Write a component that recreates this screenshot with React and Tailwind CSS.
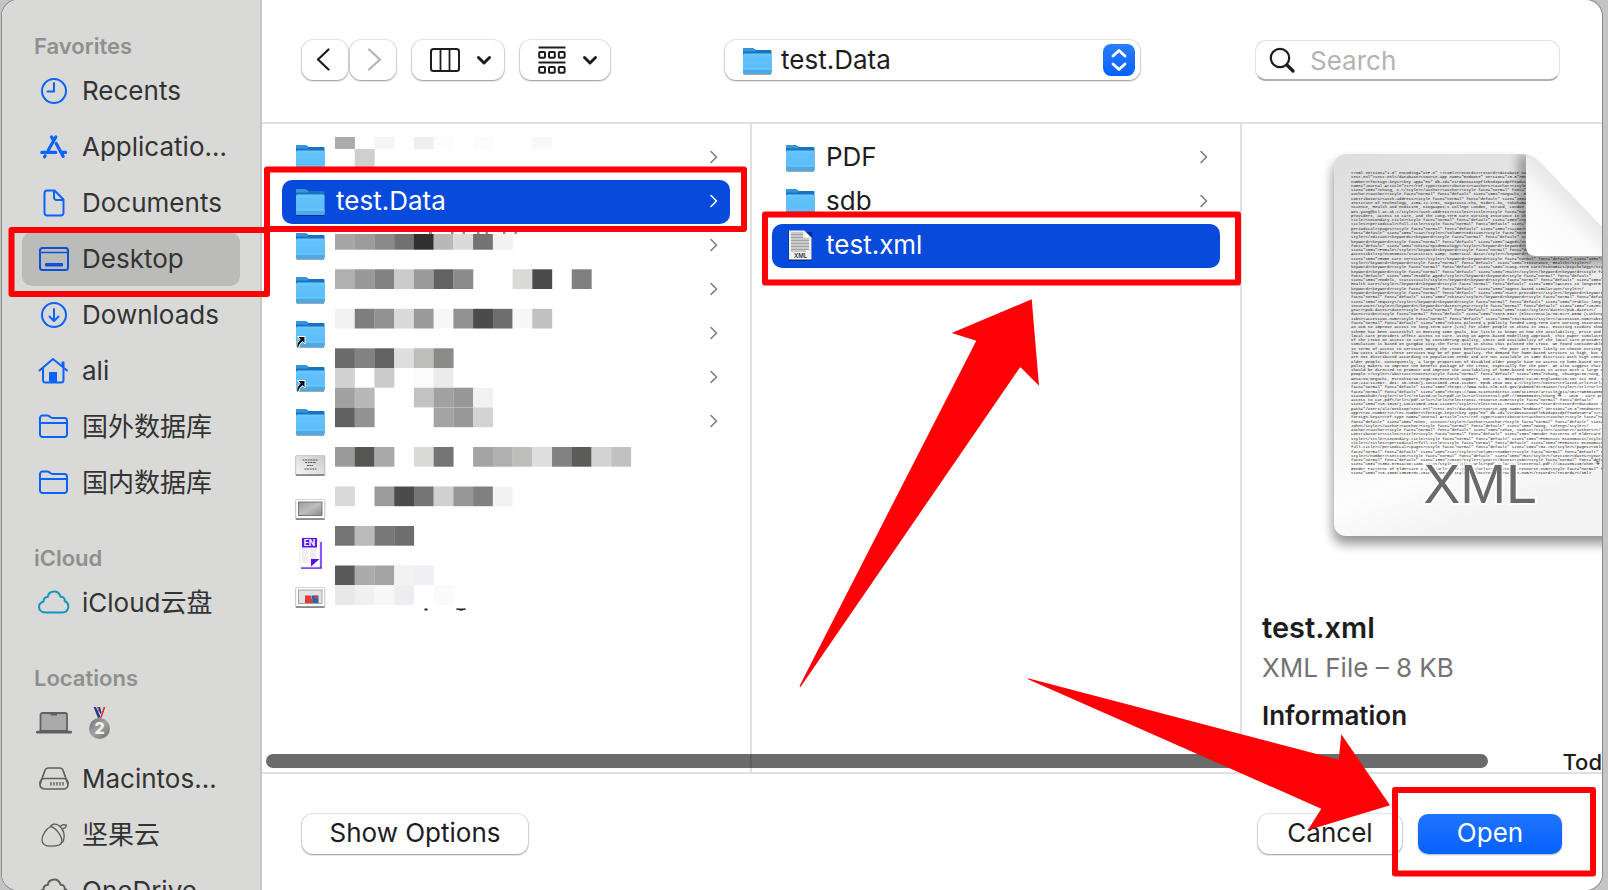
import React from "react";

const BLUE = "#0a63ff";
const GREY = "#5f5f5f";

/* ---------- sidebar icons, each on a 32 x 32 grid ---------- */

function Glyph({ color = BLUE, width = 2, children }) {
  return (
    <svg
      viewBox="0 0 32 32"
      className="h-8 w-8 shrink-0"
      fill="none"
      stroke={color}
      strokeWidth={width}
      strokeLinecap="round"
      strokeLinejoin="round"
      aria-hidden="true"
    >
      {children}
    </svg>
  );
}

const ClockGlyph = () => (
  <Glyph>
    <circle cx="16" cy="16" r="12" />
    <path d="M16 8v8.5H9.5" />
  </Glyph>
);

const AppsGlyph = () => (
  <Glyph width={3.2}>
    <path d="M17.8 6 10.4 19M13.6 6l1.6 2.8M3.8 21.4h14M6.6 25.8l.6-1M18.2 12.4l7 13M24 21.4h3.6" />
  </Glyph>
);

const DocumentGlyph = () => (
  <Glyph>
    <path d="M9 3.5h7.5l9 9V26a2.5 2.5 0 0 1-2.5 2.500H9A2.500 2.500 0 0 1 6.500 26V6A2.500 2.500 0 0 1 9 3.500Z" />
    <path d="M16 4v6.500a2.500 2.500 0 0 0 2.500 2.500H25" />
  </Glyph>
);

const DesktopGlyph = () => (
  <Glyph color="#0a50dc">
    <rect x="2" y="5" width="28" height="22" rx="2.500" />
    <path d="M2 9.500h28" strokeWidth="1.600" />
    <rect x="7" y="20" width="18" height="3.400" rx="0.800" fill="#0a50dc" stroke="none" />
  </Glyph>
);

const DownloadGlyph = () => (
  <Glyph>
    <circle cx="16" cy="16" r="12" />
    <path d="M16 10v11.500M11.500 17.500l4.500 4.500 4.500-4.500" />
  </Glyph>
);

const HomeGlyph = () => (
  <Glyph>
    <path d="M1.500 15.500 15 4l14 11.500" />
    <path d="M5 13.500V25a2.500 2.500 0 0 0 2.500 2.500h15.500a2.500 2.500 0 0 0 2.500-2.500V13.500" />
    <path d="M25 6.500v5.500" strokeWidth="3" strokeLinecap="butt" />
    <path d="M11 27.500V17h8v10.500Z" fill={BLUE} stroke="none" />
  </Glyph>
);

const FolderGlyph = () => (
  <Glyph>
    <path d="M2 7a2.500 2.500 0 0 1 2.500-2.500h4.500c1.500 0 2 .500 3 1.300s1.500 1.200 3 1.200H26.500A2.500 2.500 0 0 1 29 9.500V23.500A2.500 2.500 0 0 1 26.500 26h-22A2.500 2.500 0 0 1 2 23.500Z" />
    <path d="M2 12h27" strokeWidth="1.800" />
  </Glyph>
);

const CloudGlyph = ({ color = "#0b97bb" }) => (
  <Glyph color={color}>
    <path d="M8.500 25.500h16a6 6 0 0 0 2.200-11.500c.300-2.600-1.500-4.300-4-4.200C21.500 6.500 19 4.500 16.500 4.500c-3.800 0-6.300 2.500-6.800 5.500-2.800-.100-4.300 2-4.200 4.500C2.500 15.500 1 17.500 1 20c0 3 2.700 5.500 7.500 5.500Z" />
  </Glyph>
);

const LaptopGlyph = () => (
  <svg
    viewBox="0 0 36 32"
    className="-mx-[2px] h-8 w-9 shrink-0"
    fill="none"
    stroke={GREY}
    strokeLinecap="round"
    strokeLinejoin="round"
    aria-hidden="true"
  >
    <path d="M4.500 24V8a2 2 0 0 1 2-2h22.500a2 2 0 0 1 2 2v16Z" fill="#aaaaaa" strokeWidth="1.800" />
    <path d="M14.500 7h6.500" strokeWidth="3" strokeLinecap="butt" />
    <path d="M1.400 25.200h33.200" strokeWidth="2.800" />
  </svg>
);

const DriveGlyph = () => (
  <Glyph color={GREY} width={1.700}>
    <path d="M2.300 20.500 7 7.200C7.600 5.700 8.500 5 10 5h12c1.500 0 2.400.700 3 2.200L29.700 20.500" />
    <rect x="2" y="15.500" width="28" height="10.500" rx="4.500" />
    <path d="M13 19v3.500M16 19v3.500M19 19v3.500M22 19v3.500M25 19v3.500" strokeWidth="1.400" strokeLinecap="butt" />
  </Glyph>
);

const NutGlyph = () => (
  <Glyph color={GREY} width={1.300}>
    <path d="M12.500 7.500C8 10 4 16 4 21c0 4.500 3.500 6.200 9 6.200 6.500 0 11-.700 11-4.700 0-5-5.500-13.500-11.500-15Z" />
    <path d="M12.500 7.500C13.500 5 17 4.500 20 6c5.500 3 7.500 10.500 5.500 15.500-.500 1.500-1.500 2.300-2.500 2" />
    <path d="M22.500 8c.500-2 2.500-2.800 6-1.800-.200 2.500-2.500 3.500-4.500 3.300" />
  </Glyph>
);

function Medal() {
  return (
    <svg viewBox="0 0 24 34" className="ml-[6px] h-[34px] w-6" role="img" aria-label="2nd place medal">
      <defs>
        <linearGradient id="medal" x1="0" y1="0" x2="1" y2="1">
          <stop offset="0" stopColor="#6f6f6f" />
          <stop offset="0.500" stopColor="#a3a3a3" />
          <stop offset="1" stopColor="#6a6a6a" />
        </linearGradient>
      </defs>
      <path d="M5.500 1H9l3 7 3-7h3l-4.500 11h-2.500Z" fill="#f4f4f4" />
      <path d="M5.500 1H8l4.500 9.500-1.500 1.500h-1Z" fill="#1d3f8f" />
      <path d="M10 1h2l1.500 5-1 2.500Z" fill="#1d3f8f" />
      <path d="M15.500 1h2L13.500 12h-1.500ZM9 1h1l1.500 5-.5 1Z" fill="#e1262d" />
      <circle cx="11.500" cy="22.500" r="10.500" fill="url(#medal)" />
      <text x="11.500" y="28" textAnchor="middle" fontSize="16" fontWeight="800" fill="#f0f0f0" fontFamily="Inter, sans-serif">
        2
      </text>
    </svg>
  );
}

/* ---------- file icons ---------- */

function Folder({ alias = false }) {
  return (
    <svg viewBox="0 -1 32 32" className="h-8 w-8 shrink-0" aria-hidden="true">
      <defs>
        <linearGradient id="folder-front" x1="0" y1="0" x2="0" y2="1">
          <stop offset="0" stopColor="#6fc8fb" />
          <stop offset="0.200" stopColor="#60c1fa" />
          <stop offset="1" stopColor="#5cbdf7" />
        </linearGradient>
      </defs>
      <path d="M2.500 28.500h27.500v1.500H2.500Z" fill="#000" opacity="0.350" />
      <path d="M2 3h9.500l3.500 2h14.500q1 0 1 1v21H2Z" fill="#1873c2" />
      <path d="M2 3h9l3.500 2v1.500H2Z" fill="#3595d8" />
      <path d="M2 10q0-1.500 1.500-1.500h25.500q1.500 0 1.500 1.500v17.500q0 1.500-1.500 1.500H3.500Q2 29 2 27.500Z" fill="url(#folder-front)" />
      <path d="M2 24.500h28.500v3q0 1.500-1.500 1.500H3.500Q2 29 2 27.500Z" fill="#4aa9e6" />
      <path d="M2 24h28.500" stroke="#7fd0fb" strokeWidth="0.800" />
      {alias && (
        <path
          d="M3.500 18.500H11v7.500l-2.500-2.300Q5 26 4.500 30H2.500Q2 25 6 21.300Z"
          fill="#111"
          stroke="#fff"
          strokeWidth="1"
        />
      )}
    </svg>
  );
}

function Thumb({ kind }) {
  return (
    <svg viewBox="0 1 32 32" className="h-8 w-8 shrink-0" aria-hidden="true">
      <defs>
        <linearGradient id="slide" x1="0" y1="1" x2="1" y2="0">
          <stop offset="0" stopColor="#f6f6f6" />
          <stop offset="1" stopColor="#c9c9c9" />
        </linearGradient>
        <linearGradient id="photo" x1="0" y1="0" x2="1" y2="1">
          <stop offset="0" stopColor="#9a9a9a" />
          <stop offset="0.500" stopColor="#bdbdbd" />
          <stop offset="1" stopColor="#8a8a8a" />
        </linearGradient>
      </defs>
      <rect x="1.200" y="8" width="30" height="19.800" rx="1" fill="#000" opacity="0.200" />
      <rect x="1.700" y="7.500" width="29" height="19.500" rx="0.800" fill={kind === "text" ? "url(#slide)" : "#fff"} stroke="#b5b5b5" strokeWidth="0.600" />
      <path d="M2 27h28.500" stroke="#5f5f5f" strokeWidth="1.200" />
      {kind === "text" && (
        <path d="M8.500 12h15M11 14.500h11M13 17.500h6M10.500 21h12" stroke="#555" strokeWidth="1" strokeDasharray="2 0.600" />
      )}
      {kind === "grey" && (
        <rect x="4.500" y="10" width="23.500" height="13.500" fill="url(#photo)" stroke="#6f6f6f" strokeWidth="0.900" />
      )}
      {kind === "chart" && (
        <g>
          <rect x="4.500" y="10" width="23.500" height="13.500" fill="#e3e3e3" stroke="#999" strokeWidth="0.900" />
          <path d="M11 15.500h6v7.500h-6Z" fill="#e43a3a" />
          <path d="M17.500 15.500h7v7.500h-7Z" fill="#1f66b5" />
          <path d="M20.500 15.500h3.500v3h-3.500ZM17 19h2v4h-2Z" fill="#e43a3a" />
        </g>
      )}
    </svg>
  );
}

function EndNoteFile() {
  return (
    <svg viewBox="0 0 32 32" className="h-8 w-8 shrink-0" aria-hidden="true">
      <path d="M7 31h20V5" fill="none" stroke="#5a0fee" strokeWidth="1.400" />
      <path d="M6 3.500H25.500V30H6Z" fill="#fff" stroke="#ddd" strokeWidth="0.600" />
      <path d="M8 11h6v15H8ZM16 11h6v11h-6Z" fill="#eceef2" />
      <path d="M8 1h15v9.500H8Z" fill="#5a0fee" />
      <path d="M17 22h8.500L17 29.500Z" fill="#5a0fee" />
      <text x="15.500" y="8.800" textAnchor="middle" fontSize="8.500" fontWeight="700" fill="#fff" fontFamily="Inter, sans-serif">
        EN
      </text>
    </svg>
  );
}

function XmlFile() {
  return (
    <svg viewBox="0 0 32 32" className="h-8 w-8 shrink-0" aria-hidden="true">
      <path d="M4.500 3h23.500v29H4.500Z" fill="#000" opacity="0.350" />
      <path d="M5 1.500h15L27.500 9v21.500H5Z" fill="#f1f1f1" />
      <path d="M7 4h12M7 5.500h12M7 7h12M7 8.500h12M7 10h18M7 11.500h18M7 13h18M7 14.500h18M7 16h18M7 17.500h18M7 19h18M7 20.500h18M7 22h15" stroke="#9a9a9a" strokeWidth="0.900" />
      <path d="M20 1.500 27.500 9H20Z" fill="#fff" stroke="#c9c9c9" strokeWidth="0.500" />
      <text x="16.500" y="28.500" textAnchor="middle" fontSize="6" fontWeight="600" fill="#333" fontFamily="Inter, sans-serif">
        XML
      </text>
    </svg>
  );
}

/* ---------- sidebar ---------- */

const sections = [
  {
    title: "Favorites",
    items: [
      { label: "Recents", icon: <ClockGlyph /> },
      { label: "Applicatio…", icon: <AppsGlyph /> },
      { label: "Documents", icon: <DocumentGlyph /> },
      { label: "Desktop", icon: <DesktopGlyph />, active: true },
      { label: "Downloads", icon: <DownloadGlyph /> },
      { label: "ali", icon: <HomeGlyph /> },
      { label: "国外数据库", icon: <FolderGlyph /> },
      { label: "国内数据库", icon: <FolderGlyph /> },
    ],
  },
  { title: "iCloud", items: [{ label: "iCloud云盘", icon: <CloudGlyph /> }] },
  {
    title: "Locations",
    items: [
      { label: <Medal />, icon: <LaptopGlyph /> },
      { label: "Macintos…", icon: <DriveGlyph /> },
      { label: "坚果云", icon: <NutGlyph /> },
      { label: "OneDrive", icon: <CloudGlyph color={GREY} /> },
    ],
  },
];

function Sidebar() {
  return (
    <nav className="flex w-[260px] shrink-0 flex-col gap-[30px] overflow-hidden border-r-2 border-[#c6c6c5] bg-[#d9d9d8] pt-7">
      {sections.map((section) => (
        <section key={section.title} className="shrink-0 pr-5 pl-5">
          <h2 className="h-9 pl-3 text-[22px] leading-9 font-semibold text-[#8f8f8d]">{section.title}</h2>
          <ul className="flex flex-col gap-[2px]">
            {section.items.map((item, i) => (
              <li key={i}>
                <button
                  type="button"
                  className={
                    item.active
                      ? "flex h-[54px] w-full items-center gap-3 rounded-[10px] bg-[#bbbbba] pl-4 text-left whitespace-nowrap"
                      : "flex h-[54px] w-full items-center gap-3 pl-4 text-left whitespace-nowrap"
                  }
                >
                  {item.icon}
                  <span className="leading-8 text-[#333333]">{item.label}</span>
                </button>
              </li>
            ))}
          </ul>
        </section>
      ))}
    </nav>
  );
}

/* ---------- toolbar ---------- */

const control =
  "flex h-10 items-center justify-center rounded-[11px] bg-white shadow-[0_0_1px_1px_rgba(0,0,0,0.1),0_1px_2px_rgba(0,0,0,0.35)]";

function SmallChevron() {
  return (
    <svg viewBox="0 0 16 12" className="h-3 w-4" fill="none" stroke="#1d1d1d" strokeWidth="3" strokeLinecap="round" strokeLinejoin="round" aria-hidden="true">
      <path d="M2.500 3.500 8 9l5.500-5.500" />
    </svg>
  );
}

function Toolbar() {
  return (
    <header className="flex h-[124px] shrink-0 items-start justify-between border-b-2 border-[#e0e0e0] pt-10 pr-[42px] pl-10">
      <div className="flex gap-4">
        <div className="flex gap-[2px]">
          <button type="button" aria-label="Back" className={`${control} w-[46px]`}>
            <svg viewBox="0 0 24 24" className="h-6 w-6" fill="none" stroke="#1d1d1d" strokeWidth="2.200" strokeLinecap="round" strokeLinejoin="round">
              <path d="M15.500 1.500 5 11.500l10.500 10" />
            </svg>
          </button>
          <button type="button" aria-label="Forward" className={`${control} w-[46px]`}>
            <svg viewBox="0 0 24 24" className="h-6 w-6" fill="none" stroke="#b4b4b4" strokeWidth="2.200" strokeLinecap="round" strokeLinejoin="round">
              <path d="M8 1.500 19 11.500 8 21.500" />
            </svg>
          </button>
        </div>
        <button type="button" aria-label="View as columns" className={`${control} w-[92px] gap-4 pl-[6px]`}>
          <svg viewBox="0 0 30 24" className="h-6 w-[30px]" fill="none" stroke="#1d1d1d" aria-hidden="true">
            <rect x="1" y="1" width="28" height="22" rx="2.500" strokeWidth="2" />
            <path d="M10.500 1v22M19.500 1v22" strokeWidth="1.800" />
          </svg>
          <SmallChevron />
        </button>
        <button type="button" aria-label="Group items" className={`${control} w-[90px] gap-4 pl-[6px]`}>
          <svg viewBox="0 0 28 28" className="h-7 w-7" fill="none" stroke="#1d1d1d" strokeWidth="2" aria-hidden="true">
            <path d="M0.500 1.500h27M0.500 16.500h27" />
            <rect x="1.200" y="6" width="5.800" height="5.800" rx="1" />
            <rect x="11" y="6" width="5.800" height="5.800" rx="1" />
            <rect x="20.800" y="6" width="5.800" height="5.800" rx="1" />
            <rect x="1.200" y="21" width="5.800" height="5.800" rx="1" />
            <rect x="11" y="21" width="5.800" height="5.800" rx="1" />
            <rect x="20.800" y="21" width="5.800" height="5.800" rx="1" />
          </svg>
          <SmallChevron />
        </button>
      </div>

      <div className={`${control} relative w-[415px]`}>
        <span className="pointer-events-none absolute left-4">
          <Folder />
        </span>
        <select aria-label="Current folder" className="h-full w-full appearance-none rounded-[11px] bg-transparent pb-[2px] pl-14 text-[#1d1d1d]">
          <option>test.Data</option>
        </select>
        <span className="pointer-events-none absolute right-[5px] flex h-8 w-8 items-center justify-center rounded-lg bg-linear-to-b from-[#2a7dff] to-[#0560fd]">
          <svg viewBox="0 0 20 24" className="h-6 w-5" fill="none" stroke="#fff" strokeWidth="2.800" strokeLinecap="round" strokeLinejoin="round" aria-hidden="true">
            <path d="M4 8l6-5.500L16 8M4 16l6 5.500 6-5.500" />
          </svg>
        </span>
      </div>

      <label className="flex h-[41px] w-[305px] items-center gap-[15px] rounded-[11px] border border-b-2 border-[#e2e2e2] border-b-[#b0b0b0] bg-white pl-[13px]">
        <svg viewBox="0 0 26 26" className="h-[26px] w-[26px] shrink-0" fill="none" stroke="#1d1d1d" strokeLinecap="round" aria-label="Search">
          <circle cx="11" cy="11" r="9.200" strokeWidth="2.200" />
          <path d="m18 18 6 6" strokeWidth="3.200" />
        </svg>
        <input type="search" placeholder="Search" className="w-full min-w-0 bg-transparent outline-none placeholder:text-[#b3b3b3]" />
      </label>
    </header>
  );
}

/* ---------- browser columns ---------- */

function Row({ icon, name, chevron, active, label }) {
  return (
    <li>
      <button
        type="button"
        aria-label={label}
        className={
          active
            ? "flex h-11 w-full items-center rounded-[10px] bg-[#084bdc] px-3 pb-[2px] text-left text-white"
            : "flex h-11 w-full items-center px-3 pb-[2px] text-left text-[#1d1d1d]"
        }
      >
        {icon}
        <span className="ml-[10px] flex-1 leading-8">{name}</span>
        {chevron && (
          <svg viewBox="0 0 10 14" className="h-[14px] w-[10px]" fill="none" stroke={active ? "#fff" : "#7c7c7c"} strokeWidth="1.600" strokeLinecap="round" strokeLinejoin="round" aria-hidden="true">
            <path d="M3 1.500 8.500 7 3 12.500" />
          </svg>
        )}
      </button>
    </li>
  );
}

/* Pixelated names: [top, height, [cell colours, "" for an empty cell]] */
const mosaic = [
  [0, 12, ["#ababab", "", "#f5f5f5", "", "#eeeff1", "#fdfdfd", "", "#fcfcfc", "", "", "#f8f8f8"]],
  [12, 19.7, ["", "#cfcfcf"]],
  [97, 15.7, ["#a6a6a6", "#9b9b9b", "#8a8a88", "#727272", "#30302f", "#b8b8b8", "#dadad8", "#737373", "#f2f0f1"]],
  [132.3, 19.7, ["#b0b0b0", "#999", "#828282", "#cbcbcb", "#9a9a9a", "#626262", "#8b8b89", "", "", "#d9d9d8", "#4a4a4a", "", "#808080"]],
  [171.800, 19.7, ["#f0f1f3", "#7f7f7f", "#929292", "#dadad9", "#9a9a9a", "#f7f7f7", "#929292", "#4b4b4b", "#6e6e6e", "#f7f7f7", "#c1c1bf"]],
  [211.300, 19.7, ["#6b6b6b", "#828282", "#626262", "#dedede", "#bdbdbb", "#8b8b88"]],
  [231, 19.7, ["#d2d2d2", "", "#cbcbcb", "", "#fbfbfb", "#ebebeb"]],
  [250.700, 19.7, ["#a1a1a1", "#b8b8b8", "", "", "#c2c2c2", "#a1a1a1", "#979797", "#f2f0f1"]],
  [270.500, 19.7, ["#616161", "#929292", "", "", "", "#a4a4a4", "#999", "#d3d3d3"]],
  [310, 19.7, ["#9a9a9a", "#555553", "#a9a9a9", "", "#dadad8", "#747474", "", "#a4a4a4", "#b0b0b0", "#bebebc", "#dedede", "#828282", "#5b5b5a", "#d3d3d3", "#c1c1c1"]],
  [349.500, 19.7, ["#d9d9d7", "", "#9b9b9b", "#4b4b4b", "#747474", "#d0d0d0", "#979797", "#808080", "#f3f1f2"]],
  [389, 19.7, ["#747474", "#bababa", "#787878", "#6e6e6e"]],
  [428.500, 19.7, ["#595957", "#ababab", "#a3a3a3", "#f3f1f2", "#eff0f3"]],
  [448.200, 19.7, ["#e8e8e8", "#eff0f2", "#f7f7f7", "#ebedf0", "", "#fafafa"]],
];

function Mosaic() {
  return (
    <svg viewBox="0 0 300 480" className="pointer-events-none absolute top-[13px] left-[73px] h-[480px] w-[300px]" aria-hidden="true">
      {mosaic.map(([top, height, cells], r) =>
        cells.map((fill, c) =>
          fill ? <rect key={`${r}-${c}`} x={c * 19.73} y={top} width="19.900" height={height} fill={fill} /> : null
        )
      )}
      <path d="M94 96h3M116 96h2.500M127.500 96h2.500M142 96h2.500M150.500 96h2.500M168 96h2.500M179.500 96h2.500" stroke="#222" strokeWidth="1.200" />
      <path d="M89.500 472.500h3" stroke="#222" strokeWidth="2" />
      <path d="M121.500 472q5 2.500 9 0Z" stroke="#222" strokeWidth="1" fill="#222" />
    </svg>
  );
}

const codeLines = [
  '<?xml version="1.0" encoding="UTF-8" ?><xml><records><record><database name="test.enl" path="/Users/ali/',
  'test.enl">test.enl</database><source-app name="EndNote" version="20.0">EndNote</source-app><rec-number>1',
  'number><foreign-keys><key app="EN" db-id="v1rd9seaasxpflebxd4pz1dpffewd4twerw">1</key></foreign-keys>',
  'name="Journal Article">17</ref-type><contributors><authors><author><style face="normal" font="default"',
  'size="100%">Chang, S.</style></author><author><style face="normal" font="default" size="100%">Yang, W.',
  'author><author><style face="normal" font="default" size="100%">Deguchi, H.</style></author></authors>',
  'contributors><auth-address><style face="normal" font="default" size="100%">Department of Computer Sci',
  'Institute of Technology, 4259-J2-1701, Nagatsuta-cho, Midori-ku, Yokohama 226-8502, Japan. Electronic',
  'Science, Health and Medicine, King&apos;s College London, Strand, London WC2R 2LS, UK. Electronic add',
  'wei.yang@kcl.ac.uk.</style></auth-address><titles><title><style face="normal" font="default" size="10',
  'providers, access to care, and the Long-Term Care Nursing Insurance in China: An agent-based simulat',
  'title><secondary-title><style face="normal" font="default" size="100%">Soc Sci Med</style></secondary',
  'titles><periodical><full-title><style face="normal" font="default" size="100%">Soc Sci Med</style></f',
  'periodical><pages><style face="normal" font="default" size="100%">112667</style></pages><volume><styl',
  'font="default" size="100%">244</style></volume><edition><style face="normal" font="default" size="100',
  'style></edition><keywords><keyword><style face="normal" font="default" size="100%">Adult</style></key',
  'keyword><keyword><style face="normal" font="default" size="100%">Aged</style></keyword><keyword><styl',
  'font="default" size="100%">China/epidemiology</style></keyword><keyword><style face="normal" font="de',
  'size="100%">Female</style></keyword><keyword><style face="normal" font="default" size="100%">Health S',
  'Accessibility/economics/statistics &amp; numerical data</style></keyword><keyword><style face="normal',
  'size="100%">Home Care Services</style></keyword><keyword><style face="normal" font="default" size="100%">Humans/',
  'style></keyword><keyword><style face="normal" font="default" size="100%">Insurance, Health</style></',
  'keyword><keyword><style face="normal" font="default" size="100%">Long-Term Care/economics/psychology</style></',
  'keyword><keyword><style face="normal" font="default" size="100%">Male</style></keyword><keyword><style face="normal"',
  'font="default" size="100%">Middle Aged</style></keyword><keyword><style face="normal" font="default"',
  'size="100%">Models, Statistical</style></keyword><keyword><style face="normal" font="default" size="100%">Quality of',
  'Health Care</style></keyword><keyword><style face="normal" font="default" size="100%">Access to longterm care</style></',
  'keyword><keyword><style face="normal" font="default" size="100%">Agent-based simulation</style></',
  'keyword><keyword><style face="normal" font="default" size="100%">Care providers</style></keyword><keyword><style',
  'face="normal" font="default" size="100%">China</style></keyword><keyword><style face="normal" font="default"',
  'size="100%">Equity</style></keyword><keyword><style face="normal" font="default" size="100%">Public long-term care',
  'insurance</style></keyword></keywords><dates><year><style face="normal" font="default" size="100%">2020</style></',
  'year><pub-dates><date><style face="normal" font="default" size="100%">Jan</style></date></pub-dates></',
  'dates><isbn><style face="normal" font="default" size="100%">1873-5347 (Electronic)&#xD;0277-9536 (Linking)</style></',
  'isbn><accession-num><style face="normal" font="default" size="100%">31734481</style></accession-num><abstract><style',
  'face="normal" font="default" size="100%">China piloted a publicly funded Long-Term Care Nursing Insurance (LTCNI) with',
  'an aim to improve access to long-term care (LTC) for older people in China in 2012. Existing studies showed that the',
  'scheme has been successful in meeting some goals, but little is known on how the availability, price and quality of',
  'local care providers affect access to care. Using an Agent-based Modelling approach, this paper simulates the effect',
  'of the LTCNI on access to care by considering quality, costs and availability of the local care providers. Our',
  'simulation is based on Qingdao city-the first city in China that piloted the LTCNI. We found considerable discrepancies',
  'in terms of access to services among the LTCNI beneficiaries. The poor are more likely to choose nursing home care with',
  'low costs albeit these services may be of poor quality. The demand for home-based services is high, but those services',
  'are not distributed according to population needs and are not available in some districts with high concentration of',
  'older people. Consequently, a large proportion of disabled older people have no access to home-based services. We urge',
  'policy makers to improve the benefit package of the LTCNI, especially for the poor. We also suggest that more resources',
  'should be directed to promote and improve the availability of home-based services in areas with a large number of older',
  'people.</style></abstract><notes><style face="normal" font="default" size="100%">Chang, Shuang&#xD;Yang,',
  'Wei&#xD;Deguchi, Hiroshi&#xD;eng&#xD;Research Support, Non-U.S. Gov&apos;t&#xD;England&#xD;Soc Sci Med. 2020',
  'Jan;244:112667. doi: 10.1016/j.socscimed.2019.112667. Epub 2019 Nov 9.</style></notes><related-urls><url><style',
  'face="normal" font="default" size="100%">https://www.ncbi.nlm.nih.gov/pubmed/31734481</style></url><url><style',
  'face="normal" font="default" size="100%">https://www.sciencedirect.com/science/article/pii/S0277953619306628?',
  'via%3Dihub</style></url></related-urls><pdf-urls><url>internal-pdf://0560009371/Chang 等 - 2020 - Care providers,',
  'access to car.pdf</url></pdf-urls></urls><electronic-resource-num><style face="normal" font="default"',
  'size="100%">10.1016/j.socscimed.2019.112667</style></electronic-resource-num></record><record><database name="test.enl"',
  'path="/Users/ali/Desktop/test.enl">test.enl</database><source-app name="EndNote" version="20.0">EndNote</source-',
  'app><rec-number>2</rec-number><foreign-keys><key app="EN" db-id="v1rd9seaasxpflebxd4pz1dpffewd4twerw">2</key></',
  'foreign-keys><ref-type name="Journal Article">17</ref-type><contributors><authors><author><style face="normal"',
  'font="default" size="100%">Chen, Xinxin</style></author><author><style face="normal" font="default" size="100%">Giles,',
  'John</style></author><author><style face="normal" font="default" size="100%">Wang, Yafeng</style></',
  'author><author><style face="normal" font="default" size="100%">Zhao, Yaohui</style></author></authors></',
  'contributors><titles><title><style face="normal" font="default" size="100%">Gender Patterns of Eldercare in China</',
  'style></title><secondary-title><style face="normal" font="default" size="100%">Feminist Economics</style></secondary-',
  'title></titles><periodical><full-title><style face="normal" font="default" size="100%">Feminist Economics</style></',
  'full-title></periodical><pages><style face="normal" font="default" size="100%">54-76</style></pages><volume><style',
  'face="normal" font="default" size="100%">24</style></volume><number><style face="normal" font="default" size="100%">2</',
  'style></number><section><style face="normal" font="default" size="100%">54</style></section><dates><year><style',
  'face="normal" font="default" size="100%">2018</style></year></dates><isbn><style face="normal" font="default"',
  'size="100%">1354-5701&#xD;1466-4372</style></isbn><urls><pdf-urls><url>internal-pdf://2642106215/Chen 等 - 2018 -',
  'Gender Patterns of Eldercare i.pdf</url></pdf-urls></urls><electronic-resource-num><style face="normal" font="default"',
  'size="100%">10.1080/13545701.2018.1438639</style></electronic-resource-num></record></records></xml>',
];

/* Large document thumbnail, clipped by the pane's right edge */
function DocumentPreview() {
  return (
    <svg viewBox="0 0 360 484" className="h-[484px] w-[360px] shrink-0" role="img" aria-label="test.xml">
      <defs>
        <linearGradient id="paper" x1="0" y1="0" x2="0.300" y2="1">
          <stop offset="0" stopColor="#dedede" />
          <stop offset="0.450" stopColor="#eaeaea" />
          <stop offset="0.850" stopColor="#fdfdfd" />
          <stop offset="1" stopColor="#f3f3f3" />
        </linearGradient>
        <linearGradient id="curl" x1="0" y1="1" x2="0.500" y2="0.500">
          <stop offset="0" stopColor="#ffffff" />
          <stop offset="0.700" stopColor="#fafafa" />
          <stop offset="1" stopColor="#e9e9e9" />
        </linearGradient>
        <filter id="soft" x="-20%" y="-20%" width="140%" height="140%">
          <feGaussianBlur stdDeviation="6" />
        </filter>
        <clipPath id="sheet">
          <path d="M104 30h174q12 0 20 8L400 147v265H104a12 12 0 0 1-12-12V42a12 12 0 0 1 12-12Z" />
        </clipPath>
      </defs>
      <path d="M103 37H280L400 160V420H103a12 12 0 0 1-12-12V49a12 12 0 0 1 12-12Z" fill="#000" opacity="0.420" filter="url(#soft)" />
      <g clipPath="url(#sheet)">
        <rect x="92" y="30" width="308" height="382" fill="url(#paper)" />
        <g fontFamily="'Liberation Mono', 'Noto Sans CJK SC', monospace" fontSize="4" fill="#111">
          {codeLines.map((line, i) => (
            <text key={i} x="109" y={50 + i * 4.285} xmlSpace="preserve">
              {line}
            </text>
          ))}
        </g>
        <path d="M283 30v92q0 12 12 12h110v-2" fill="none" stroke="#000" strokeWidth="10" opacity="0.450" filter="url(#soft)" />
      </g>
      <path d="M284 31q8 1 14 7L388 132H294q-10 0-10-10Z" fill="url(#curl)" />
      <text x="238" y="379" textAnchor="middle" fontSize="55" fill="#6a6a6a" stroke="#fff" strokeOpacity="0.700" strokeWidth="4" paintOrder="stroke" fontFamily="'Liberation Sans', sans-serif">
        XML
      </text>
    </svg>
  );
}

function Columns() {
  return (
    <main className="relative flex min-h-0 flex-1 overflow-hidden">
      <section className="relative w-[490px] shrink-0 border-r-2 border-[#e0e0e0] px-5 pt-3">
        <ul>
          <Row icon={<Folder />} chevron label="Folder" />
          <Row icon={<Folder />} name="test.Data" chevron active />
          <Row icon={<Folder />} chevron label="Folder" />
          <Row icon={<Folder />} chevron label="Folder" />
          <Row icon={<Folder alias />} chevron label="Folder alias" />
          <Row icon={<Folder alias />} chevron label="Folder alias" />
          <Row icon={<Folder />} chevron label="Folder" />
          <Row icon={<Thumb kind="text" />} label="Image" />
          <Row icon={<Thumb kind="grey" />} label="Image" />
          <Row icon={<EndNoteFile />} label="EndNote library" />
          <Row icon={<Thumb kind="chart" />} label="Image" />
        </ul>
        <Mosaic />
      </section>
      <section className="w-[490px] shrink-0 border-r-2 border-[#e0e0e0] px-5 pt-3">
        <ul>
          <Row icon={<Folder />} name="PDF" chevron />
          <Row icon={<Folder />} name="sdb" chevron />
          <Row icon={<XmlFile />} name="test.xml" active />
        </ul>
      </section>
      <section className="flex min-w-0 flex-1 flex-col overflow-hidden text-[#1d1d1d]">
        <DocumentPreview />
        <h1 className="pl-5 text-[29px] leading-10 font-semibold">test.xml</h1>
        <p className="pl-5 leading-10 text-[#737373]">XML File – 8 KB</p>
        <h2 className="mt-2 pl-5 leading-10 font-semibold">Information</h2>
        <p className="mt-2 text-right text-[22px] leading-9 font-medium">Tod</p>
      </section>
      <div className="absolute right-[114px] bottom-1 left-1 h-[14px] rounded-full bg-black/58" />
    </main>
  );
}

function Footer() {
  return (
    <footer className="flex h-[118px] shrink-0 items-start justify-between border-t-2 border-[#e0e0e0] pt-10 pr-10 pl-10">
      <button type="button" className={`${control} w-[226px] pb-[3px] text-[#1d1d1d]`}>
        Show Options
      </button>
      <div className="flex gap-4">
        <button type="button" className={`${control} w-36 pb-[3px] text-[#1d1d1d]`}>
          Cancel
        </button>
        <button type="button" className="flex h-10 w-36 items-center justify-center rounded-[10px] bg-linear-to-b from-[#1f75ff] to-[#0560fd] pb-[3px] text-white shadow-[0_1px_2px_rgba(0,0,0,0.3)]">
          Open
        </button>
      </div>
    </footer>
  );
}

/* Red frames and arrows drawn over the dialog */
function Annotations() {
  return (
    <svg viewBox="0 0 1608 890" className="pointer-events-none absolute top-0 left-0 h-[890px] w-[1608px]" aria-hidden="true">
      <g fill="none" stroke="#ff0006" strokeWidth="6" strokeLinejoin="round">
        <rect x="11.500" y="230" width="255.500" height="64" />
        <rect x="267" y="169.500" width="477" height="59.500" />
        <rect x="765" y="214.500" width="473" height="68" />
        <rect x="1395" y="790" width="198" height="83.500" />
      </g>
      <g fill="#ff0006">
        <path d="M799.500 686 976.300 340.700 951.700 333 1031.700 299.300 1039 385.700 1020.300 367 800.500 687Z" />
        <path d="M1028 678.300 1338.700 759.700 1341.300 734.300 1390 805.300 1307.700 830.300 1321.300 808.700 1028 679.300Z" />
      </g>
    </svg>
  );
}

export default function App() {
  return (
    <div className="relative flex h-screen overflow-hidden bg-[#c4c4c4] pr-[6px] pl-[2px] font-[Inter,'Noto_Sans_CJK_SC',sans-serif] text-[26px]">
      <div className="flex min-w-0 flex-1 overflow-hidden rounded-[16px] bg-white shadow-[0_0_0_1px_#8a8a8a]">
        <Sidebar />
        <div className="flex min-w-0 flex-1 flex-col">
          <Toolbar />
          <Columns />
          <Footer />
        </div>
      </div>
      <Annotations />
    </div>
  );
}
